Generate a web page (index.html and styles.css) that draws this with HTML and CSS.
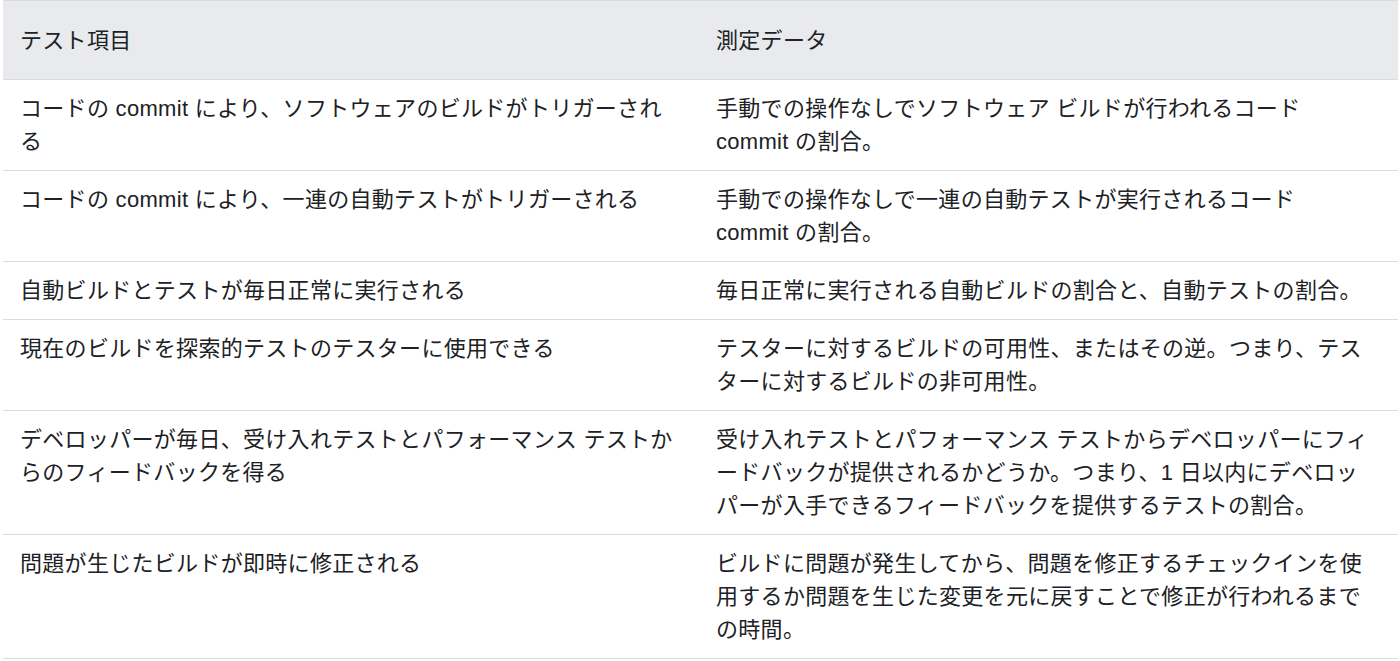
FILE: index.html
```html
<!DOCTYPE html>
<html lang="ja">
<head>
<meta charset="utf-8">
<title>テスト項目と測定データ</title>
<link rel="stylesheet" href="styles.css">
</head>
<body>
<table class="metrics">
  <colgroup>
    <col class="col-item">
    <col class="col-data">
  </colgroup>
  <thead>
    <tr>
      <th>テスト項目</th>
      <th>測定データ</th>
    </tr>
  </thead>
  <tbody>
    <tr>
      <td>コードの commit により、ソフトウェアのビルドがトリガーされ<br>る</td>
      <td>手動での操作なしでソフトウェア ビルドが行われるコード<br>commit の割合。</td>
    </tr>
    <tr>
      <td>コードの commit により、一連の自動テストがトリガーされる</td>
      <td>手動での操作なしで一連の自動テストが実行されるコード<br>commit の割合。</td>
    </tr>
    <tr>
      <td>自動ビルドとテストが毎日正常に実行される</td>
      <td>毎日正常に実行される自動ビルドの割合と、自動テストの割合。</td>
    </tr>
    <tr>
      <td>現在のビルドを探索的テストのテスターに使用できる</td>
      <td>テスターに対するビルドの可用性、またはその逆。つまり、テス<br>ターに対するビルドの非可用性。</td>
    </tr>
    <tr>
      <td>デベロッパーが毎日、受け入れテストとパフォーマンス テストか<br>らのフィードバックを得る</td>
      <td>受け入れテストとパフォーマンス テストからデベロッパーにフィ<br>ードバックが提供されるかどうか。つまり、1 日以内にデベロッ<br>パーが入手できるフィードバックを提供するテストの割合。</td>
    </tr>
    <tr>
      <td>問題が生じたビルドが即時に修正される</td>
      <td>ビルドに問題が発生してから、問題を修正するチェックインを使<br>用するか問題を生じた変更を元に戻すことで修正が行われるまで<br>の時間。</td>
    </tr>
  </tbody>
</table>
</body>
</html>
```

FILE: styles.css
```css
html, body {
  margin: 0;
  padding: 0;
  background: #ffffff;
}

body {
  font-family: "Liberation Sans", "Noto Sans CJK JP", sans-serif;
  font-size: 22px;
  line-height: 33px;
  color: #202124;
  letter-spacing: 0.3px;
}

.metrics {
  margin-left: 3px;
  width: 1395px;
  border-collapse: collapse;
  table-layout: fixed;
}

.col-item {
  width: 696px;
}

.col-data {
  width: 699px;
}

.metrics th {
  text-align: left;
  font-weight: 400;
  background: #e8eaed;
  padding: 23px 17px 22px;
  border-top: 1px solid #dadce0;
  border-bottom: 1px solid #dadce0;
  vertical-align: top;
  white-space: nowrap;
}

.metrics td {
  padding: 12px 17px 12px;
  border-bottom: 1px solid #dadce0;
  vertical-align: top;
  white-space: nowrap;
}
```
